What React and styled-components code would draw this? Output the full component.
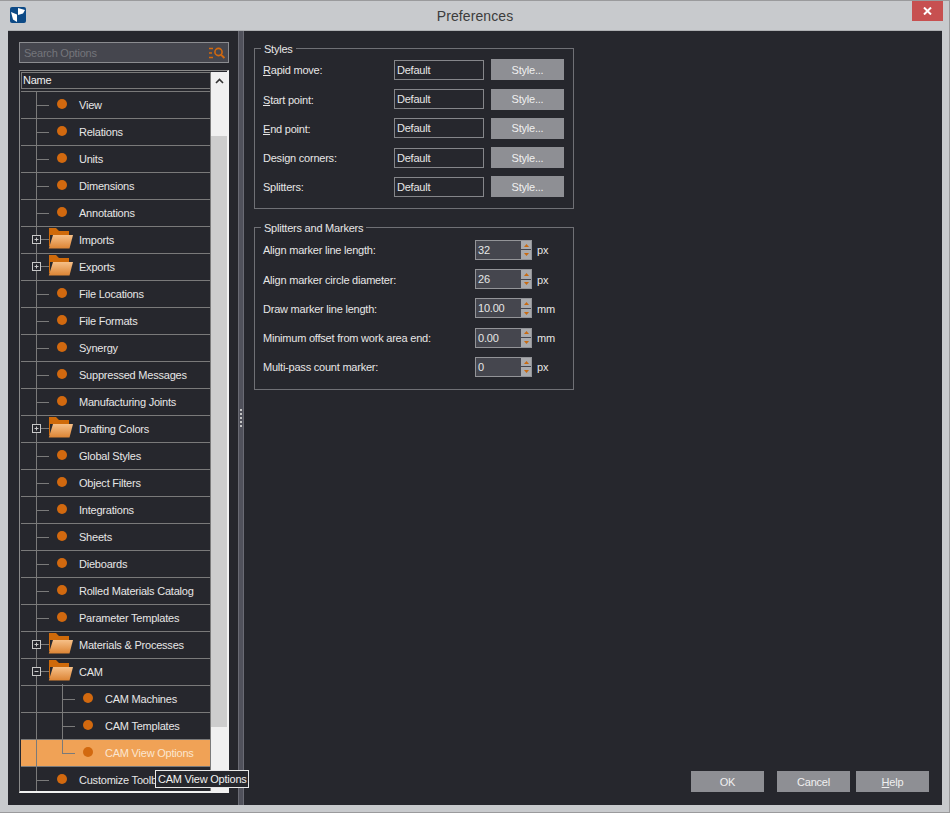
import styled, { createGlobalStyle } from "styled-components";

const treeItems = [
  { label: "View" },
  { label: "Relations" },
  { label: "Units" },
  { label: "Dimensions" },
  { label: "Annotations" },
  { label: "Imports", folder: "plus" },
  { label: "Exports", folder: "plus" },
  { label: "File Locations" },
  { label: "File Formats" },
  { label: "Synergy" },
  { label: "Suppressed Messages" },
  { label: "Manufacturing Joints" },
  { label: "Drafting Colors", folder: "plus" },
  { label: "Global Styles" },
  { label: "Object Filters" },
  { label: "Integrations" },
  { label: "Sheets" },
  { label: "Dieboards" },
  { label: "Rolled Materials Catalog" },
  { label: "Parameter Templates" },
  { label: "Materials & Processes", folder: "plus" },
  { label: "CAM", folder: "minus" },
  { label: "CAM Machines", child: true },
  { label: "CAM Templates", child: true },
  { label: "CAM View Options", child: true, last: true, selected: true },
  { label: "Customize Toolbars" },
];

const styleRows = [
  { label: "Rapid move:", key: "R", rest: "apid move:" },
  { label: "Start point:", key: "S", rest: "tart point:" },
  { label: "End point:", key: "E", rest: "nd point:" },
  { label: "Design corners:", rest: "Design corners:" },
  { label: "Splitters:", rest: "Splitters:" },
];

const markerRows = [
  { label: "Align marker line length:", value: "32", unit: "px" },
  { label: "Align marker circle diameter:", value: "26", unit: "px" },
  { label: "Draw marker line length:", value: "10.00", unit: "mm" },
  { label: "Minimum offset from work area end:", value: "0.00", unit: "mm" },
  { label: "Multi-pass count marker:", value: "0", unit: "px" },
];

const AppLogo = () => (
  <svg width="16" height="16" viewBox="0 0 16 16">
    <rect width="16" height="16" rx="2" fill="#0d4a86" />
    <path d="M1 5 L7 7.5 V15 L3 12.5 Z" fill="#fff" />
    <path d="M8 1 L15 3 L13 6.5 L8 8 Z" fill="#fff" />
  </svg>
);

const SearchIcon = () => (
  <svg width="16" height="12" viewBox="0 0 16 12">
    <path d="M0 1.5H4M0 6H3M0 10.5H4" stroke="#d2690f" strokeWidth="1.6" fill="none" />
    <circle cx="9.5" cy="5" r="3.6" stroke="#d2690f" strokeWidth="1.6" fill="none" />
    <path d="M12 7.6L15.4 11" stroke="#d2690f" strokeWidth="2" fill="none" />
  </svg>
);

const FolderIcon = () => (
  <svg width="25" height="21" viewBox="0 0 25 21">
    <defs>
      <linearGradient id="folderFront" x1="0" y1="0" x2="0" y2="1">
        <stop offset="0" stopColor="#f6c088" />
        <stop offset="1" stopColor="#dc8434" />
      </linearGradient>
    </defs>
    <path d="M1 0H8L11 3H21V7H1Z" fill="#cf6a0a" />
    <path d="M1 7H2V18H1Z" fill="#cf6a0a" />
    <path d="M5 7H25L21.5 20.5H0.8Z" fill="url(#folderFront)" />
  </svg>
);

// tree lines of one row, drawn over the full 27px row height
const TreeGuide = ({ child, last, folder }) => (
  <GuideSvg width="56" height="27" viewBox="0 0 56 27">
    <path d="M15.5 0V27" stroke="#7a7a7a" fill="none" />
    {child && (
      <>
        <path d={last ? "M41.5 0V14" : "M41.5 0V27"} stroke="#7a7a7a" fill="none" />
        <path d="M41.5 13.5H54" stroke="#7a7a7a" fill="none" />
      </>
    )}
    {!child && !folder && <path d="M16 13.5H28" stroke="#7a7a7a" fill="none" />}
    {folder && (
      <>
        <path d="M20 12.5H28" stroke="#7a7a7a" fill="none" />
        <rect x="11.5" y="8.5" width="8" height="8" fill="#26272d" stroke="#c8c8c8" />
        <path d="M13.5 12.5H17.5" stroke="#c8c8c8" fill="none" />
        {folder === "plus" && <path d="M15.5 10.5V14.5" stroke="#c8c8c8" fill="none" />}
      </>
    )}
    {folder === "minus" && <path d="M41.5 25V27" stroke="#7a7a7a" fill="none" />}
  </GuideSvg>
);

const SpinArrows = () => (
  <Spin>
    <SpinHalf>
      <svg width="5" height="3" viewBox="0 0 5 3">
        <path d="M2.5 0L5 3H0Z" fill="#c8690f" />
      </svg>
    </SpinHalf>
    <SpinHalf>
      <svg width="5" height="3" viewBox="0 0 5 3">
        <path d="M0 0H5L2.5 3Z" fill="#c8690f" />
      </svg>
    </SpinHalf>
  </Spin>
);

const App = () => {
  return (
    <>
      <GlobalStyle />
      <Window>
        <TitleBar>
          <LogoSlot>
            <AppLogo />
          </LogoSlot>
          <Title>Preferences</Title>
          <CloseButton>
            <svg width="9" height="8" viewBox="0 0 9 8">
              <path d="M1 0.5L8 7.5M8 0.5L1 7.5" stroke="#fff" strokeWidth="2" fill="none" />
            </svg>
          </CloseButton>
        </TitleBar>
        <Body>
          <LeftPane>
            <SearchBox>
              <SearchHint>Search Options</SearchHint>
              <SearchIcon />
            </SearchBox>
            <TreeFrame>
              <TreeColumn>
                <TreeHeader>Name</TreeHeader>
                <TreeRows>
                  {treeItems.map((item) => (
                    <TreeRow key={item.label} $selected={item.selected}>
                      <TreeGuide child={item.child} last={item.last} folder={item.folder} />
                      {item.folder ? (
                        <FolderSlot>
                          <FolderIcon />
                        </FolderSlot>
                      ) : (
                        <Dot $child={item.child} />
                      )}
                      <RowLabel $folder={item.folder} $selected={item.selected}>
                        {item.label}
                      </RowLabel>
                    </TreeRow>
                  ))}
                </TreeRows>
              </TreeColumn>
              <ScrollBar>
                <ScrollArrow>
                  <svg width="9" height="6" viewBox="0 0 9 6">
                    <path d="M1 5L4.5 1.5L8 5" stroke="#333" strokeWidth="1.6" fill="none" />
                  </svg>
                </ScrollArrow>
                <ScrollThumb />
              </ScrollBar>
              <Tooltip>CAM View Options</Tooltip>
            </TreeFrame>
          </LeftPane>
          <Splitter>
            <Grip />
            <Grip />
            <Grip />
            <Grip />
            <Grip />
          </Splitter>
          <RightPane>
            <Group $height={161} $top={10.25}>
              <Legend>Styles</Legend>
              {styleRows.map((row) => (
                <FormRow key={row.label}>
                  <FieldLabel $width={131}>
                    {row.key && <u>{row.key}</u>}
                    {row.rest}
                  </FieldLabel>
                  <StyleField>Default</StyleField>
                  <ActionButton>Style...</ActionButton>
                </FormRow>
              ))}
            </Group>
            <Group $height={163} $top={11.25}>
              <Legend>Splitters and Markers</Legend>
              {markerRows.map((row) => (
                <FormRow key={row.label}>
                  <FieldLabel $width={212}>{row.label}</FieldLabel>
                  <SpinField>
                    <SpinValue>{row.value}</SpinValue>
                    <SpinArrows />
                  </SpinField>
                  <Unit>{row.unit}</Unit>
                </FormRow>
              ))}
            </Group>
            <Footer>
              <ActionButton $gap={0}>OK</ActionButton>
              <ActionButton $gap={13}>Cancel</ActionButton>
              <ActionButton $gap={6}>
                <u>H</u>elp
              </ActionButton>
            </Footer>
          </RightPane>
        </Body>
      </Window>
    </>
  );
};

export default App;

// Styled components
const GlobalStyle = createGlobalStyle`
  html, body {
    margin: 0;
    padding: 0;
    background: #c8cacd;
  }

  * {
    box-sizing: border-box;
  }
`;

const Window = styled.div`
  width: 950px;
  height: 813px;
  display: flex;
  flex-direction: column;
  padding: 0 7px 7px 8px;
  background: #c8cacd;
  border: 1px solid #9a9a9c;
  border-width: 1px 1px 1px 0;
  font-family: "Liberation Sans", Arial, sans-serif;
  font-size: 11px;
  letter-spacing: -0.22px;
  color: #e6e6e6;
  overflow: hidden;
`;

const TitleBar = styled.div`
  position: relative;
  height: 29px;
  flex: none;
  display: flex;
  align-items: center;
  justify-content: center;
`;

const LogoSlot = styled.div`
  position: absolute;
  left: 2px;
  top: 6px;
  height: 16px;
`;

const Title = styled.div`
  font-size: 14px;
  color: #3c3c3c;
  letter-spacing: 0.1px;
  padding-top: 1px;
`;

const CloseButton = styled.div`
  position: absolute;
  right: -1px;
  top: 0;
  width: 31px;
  height: 20px;
  background: #c75050;
  display: flex;
  align-items: center;
  justify-content: center;
`;

const Body = styled.div`
  flex: 1;
  min-height: 0;
  display: flex;
  background: #26272d;
  border-top: 1px solid #aeb0b3;
`;

const LeftPane = styled.div`
  width: 230px;
  flex: none;
  padding: 11px 9px 0 11px;
`;

const SearchBox = styled.div`
  height: 21px;
  display: flex;
  align-items: center;
  justify-content: space-between;
  padding: 0 3px 0 4px;
  background: #45464e;
  border: 1px solid #8b8c90;
`;

const SearchHint = styled.span`
  color: #74757b;
`;

const TreeFrame = styled.div`
  position: relative;
  height: 723px;
  margin-top: 7px;
  display: flex;
  padding: 1px 0 0 1px;
  border: 1px solid #f2f2f2;
  border-left-color: #8a8a8a;
  border-top-color: #8a8a8a;
  border-width: 1px 2px 2px 1px;
`;

const TreeColumn = styled.div`
  width: 190px;
  flex: none;
  overflow: hidden;
  border-right: 1px solid #7a7a7a;
`;

const TreeHeader = styled.div`
  height: 17px;
  padding-left: 1px;
  line-height: 15px;
  color: #f0f0f0;
  border: 1px solid #7a7a7a;
  border-right: none;
`;

const TreeRows = styled.div`
  margin-top: 2px;
  border-top: 1px solid #7a7a7a;
`;

const TreeRow = styled.div`
  height: 27px;
  display: flex;
  align-items: center;
  background: ${(p) => (p.$selected ? "#f0a256" : "transparent")};
  border-bottom: 1px solid #7a7a7a;
  white-space: nowrap;
`;

const GuideSvg = styled.svg`
  flex: none;
`;

const Dot = styled.span`
  width: 10px;
  height: 10px;
  flex: none;
  margin-top: -2px;
  margin-left: ${(p) => (p.$child ? "6px" : "-20px")};
  border-radius: 50%;
  background: #d2690f;
`;

const FolderSlot = styled.span`
  flex: none;
  height: 21px;
  margin-left: -29px;
  margin-top: -4px;
`;

const RowLabel = styled.span`
  margin-left: ${(p) => (p.$folder ? "6px" : "12px")};
  color: ${(p) => (p.$selected ? "#fbe6d0" : "#e6e6e6")};
`;

const ScrollBar = styled.div`
  width: 16px;
  flex: none;
  background: #f0f0f0;
`;

const ScrollArrow = styled.div`
  height: 17px;
  display: flex;
  align-items: center;
  justify-content: center;
`;

const ScrollThumb = styled.div`
  height: 591px;
  margin-top: 47px;
  background: #cdcdcd;
`;

const Tooltip = styled.div`
  position: absolute;
  left: 135px;
  top: 699px;
  width: 94px;
  height: 18px;
  padding-left: 2px;
  line-height: 16px;
  color: #f0f0f0;
  background: #26272d;
  border: 1px solid #e8e8e8;
  white-space: nowrap;
  z-index: 1;
`;

const Splitter = styled.div`
  width: 6px;
  flex: none;
  display: flex;
  flex-direction: column;
  align-items: center;
  justify-content: center;
  gap: 2px;
  background: #50515b;
  border-left: 1px solid #6a6b74;
  border-right: 1px solid #6a6b74;
`;

const Grip = styled.span`
  width: 2px;
  height: 2px;
  background: #c4c4c4;
`;

const RightPane = styled.div`
  flex: 1;
  min-width: 0;
  display: flex;
  flex-direction: column;
  padding: 17px 13px 13px 10px;
`;

const Group = styled.div`
  position: relative;
  width: 320px;
  height: ${(p) => p.$height}px;
  margin-bottom: 18px;
  padding: ${(p) => p.$top}px 9px 0 8px;
  display: flex;
  flex-direction: column;
  gap: 8.25px;
  border: 1px solid #6f7075;
`;

const Legend = styled.span`
  position: absolute;
  left: 6px;
  top: -7px;
  padding: 0 3px;
  line-height: 15px;
  background: #26272d;
`;

const FormRow = styled.div`
  height: 21px;
  display: flex;
  align-items: center;
`;

const FieldLabel = styled.span`
  width: ${(p) => p.$width}px;
  flex: none;
  padding-top: 1px;
`;

const StyleField = styled.div`
  width: 90px;
  height: 20px;
  padding-left: 2px;
  line-height: 18px;
  border: 1px solid #85868a;
  background: #26272d;
`;

const ActionButton = styled.div`
  width: 73px;
  height: 21px;
  flex: none;
  margin-left: ${(p) => p.$gap ?? 7}px;
  display: flex;
  align-items: center;
  justify-content: center;
  color: #f0f0f0;
  background: #8e8f94;
`;

const SpinField = styled.div`
  width: 57px;
  height: 20px;
  flex: none;
  display: flex;
  border: 1px solid #939498;
  background: #45464e;
`;

const SpinValue = styled.span`
  flex: 1;
  padding-left: 2px;
  line-height: 18px;
`;

const Spin = styled.div`
  width: 10px;
  flex: none;
  display: flex;
  flex-direction: column;
  gap: 1px;
  background: #45464e;
`;

const SpinHalf = styled.div`
  flex: 1;
  display: flex;
  align-items: center;
  justify-content: center;
  background: #a9aaad;
`;

const Unit = styled.span`
  margin-left: 5px;
  padding-top: 1px;
`;

const Footer = styled.div`
  margin-top: auto;
  display: flex;
  justify-content: flex-end;
`;
